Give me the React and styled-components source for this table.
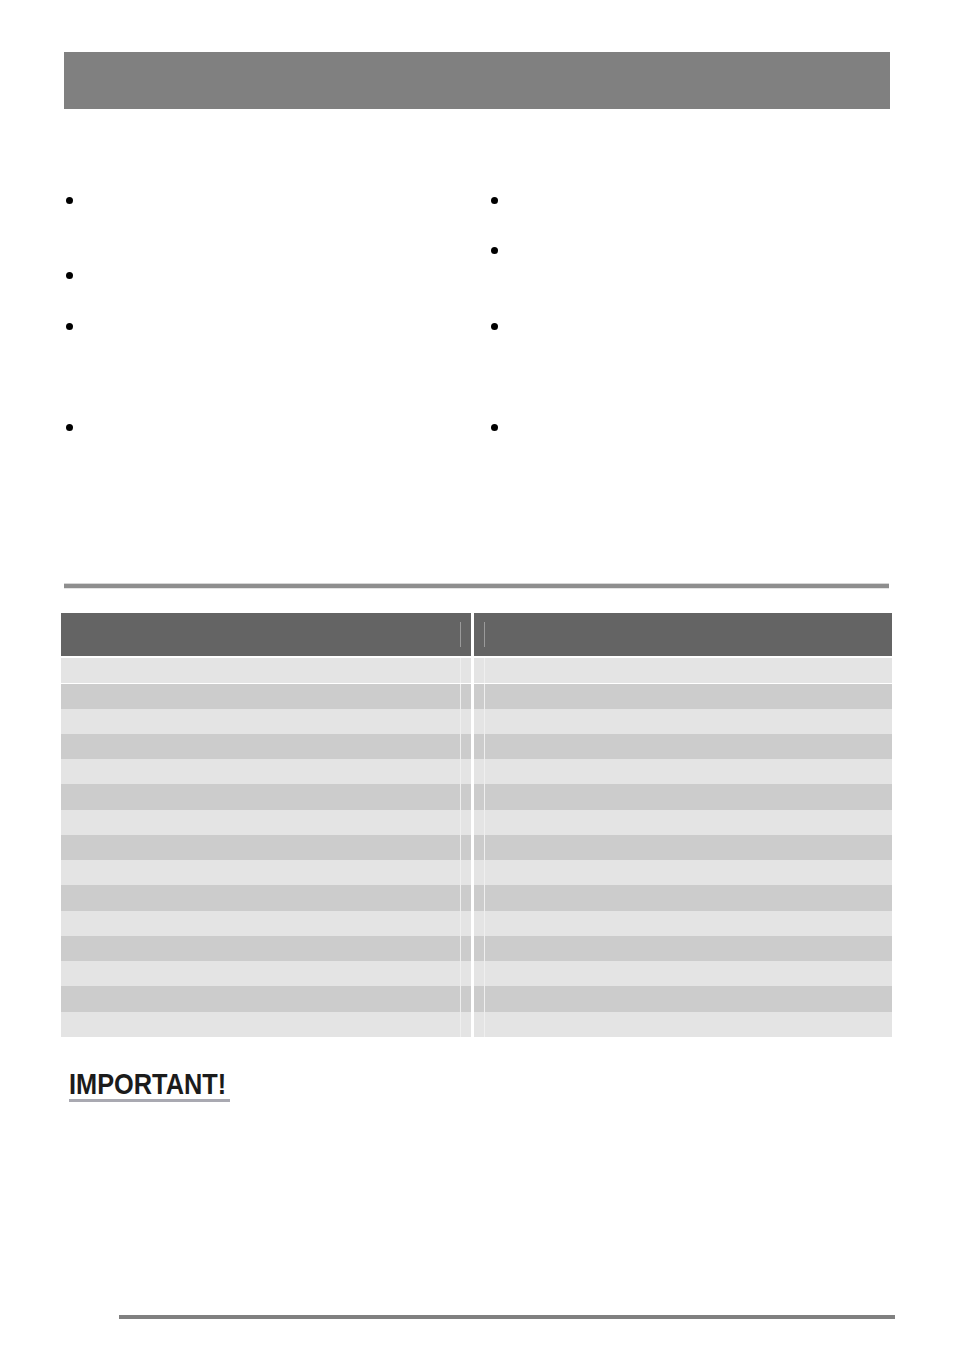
import React from "react";
import styled, { createGlobalStyle } from "styled-components";

const GlobalStyle = createGlobalStyle`
  html, body { margin: 0; padding: 0; background: #ffffff; }
  body { font-family: "Liberation Sans", Arial, sans-serif; color: #1b1b1b; }
`;

const Page = styled.div`
  width: 954px;
  min-height: 1355px;
  display: flex;
  flex-direction: column;
  padding-top: 52px;
  box-sizing: border-box;
`;

const HeaderBar = styled.div`
  margin-left: 64px;
  width: 826px;
  height: 57px;
  background: #808080;
`;

const Columns = styled.div`
  margin-top: 78.5px;
  padding-left: 66px;
  height: 396.5px;
  display: grid;
  grid-template-columns: 425px 1fr;
`;

const List = styled.ul`
  list-style: none;
  margin: 0;
  padding: 0;
  display: flex;
  flex-direction: column;
`;

const Item = styled.li`
  height: ${(p) => p.$lines * 25.25}px;
  display: flex;
  align-items: flex-start;
  gap: 14px;
`;

const Dot = styled.span`
  width: 7px;
  height: 7px;
  margin-top: 9px;
  border-radius: 50%;
  background: #000;
  flex: none;
`;

const ItemText = styled.span`
  font-size: 14px;
  line-height: 25.25px;
`;

const Separator = styled.div`
  margin-left: 64px;
  width: 825px;
  height: 4px;
  background: #8e8e8e;
  box-shadow: 0 -1px 0 #d6d6d6, 0 1px 0 #e4e4e4;
`;

const Table = styled.div`
  margin: 25px 0 0 61px;
  width: 831px;
  display: flex;
  flex-direction: column;
`;

const HeadRow = styled.div`
  display: grid;
  grid-template-columns: 410px 3px 1fr;
  height: 43px;
  margin-bottom: 2px;
`;

const HeadCell = styled.div`
  background: #646464;
  position: relative;
  &::after {
    content: "";
    position: absolute;
    top: 9px;
    height: 25px;
    width: 1px;
    background: #9a9a9a;
    ${(p) => (p.$side === "left" ? "right: 10px;" : "left: 10px;")}
  }
`;

const Gap = styled.div`
  background: #ffffff;
`;

const Row = styled.div`
  display: grid;
  grid-template-columns: 399px 11px 3px 11px 1fr;
  height: 25.25px;
  background: ${(p) => (p.$dark ? "#cccccc" : "#e4e4e4")};
  border-top: ${(p) => (p.$split ? "1px solid #ffffff" : "none")};
  box-sizing: border-box;
`;

const Cell = styled.div``;

const Narrow = styled.div`
  ${(p) =>
    p.$edge === "left"
      ? "border-left: 1px solid #efefef;"
      : "border-right: 1px solid #efefef;"}
`;

const Important = styled.div`
  margin: 32px 0 0 69px;
  width: 161px;
  height: 30px;
  border-bottom: 3px solid #a9a9b1;
`;

const ImportantText = styled.span`
  display: inline-block;
  font-family: "Liberation Sans", Arial, sans-serif;
  font-weight: 700;
  font-size: 30px;
  line-height: 30px;
  color: #1b1b1b;
  transform: scaleX(0.845);
  transform-origin: left center;
  white-space: nowrap;
`;

const FooterLine = styled.div`
  margin: 213px 0 0 119px;
  width: 776px;
  height: 4.5px;
  background: #808080;
`;

const leftItems = [3, 2, 4, 4];
const rightItems = [2, 3, 4, 4];
const rows = Array.from({ length: 15 }, (_, i) => i);

export default function App() {
  return (
    <>
      <GlobalStyle />
      <Page>
        <HeaderBar />
        <Columns>
          <List>
            {leftItems.map((l, i) => (
              <Item key={i} $lines={l}>
                <Dot />
                <ItemText />
              </Item>
            ))}
          </List>
          <List>
            {rightItems.map((l, i) => (
              <Item key={i} $lines={l}>
                <Dot />
                <ItemText />
              </Item>
            ))}
          </List>
        </Columns>
        <Separator />
        <Table>
          <HeadRow>
            <HeadCell $side="left" />
            <Gap />
            <HeadCell $side="right" />
          </HeadRow>
          {rows.map((i) => (
            <Row key={i} $dark={i % 2 === 1} $split={i === 1}>
              <Cell />
              <Narrow $edge="left" />
              <Gap />
              <Narrow $edge="right" />
              <Cell />
            </Row>
          ))}
        </Table>
        <Important>
          <ImportantText>IMPORTANT!</ImportantText>
        </Important>
        <FooterLine />
      </Page>
    </>
  );
}
